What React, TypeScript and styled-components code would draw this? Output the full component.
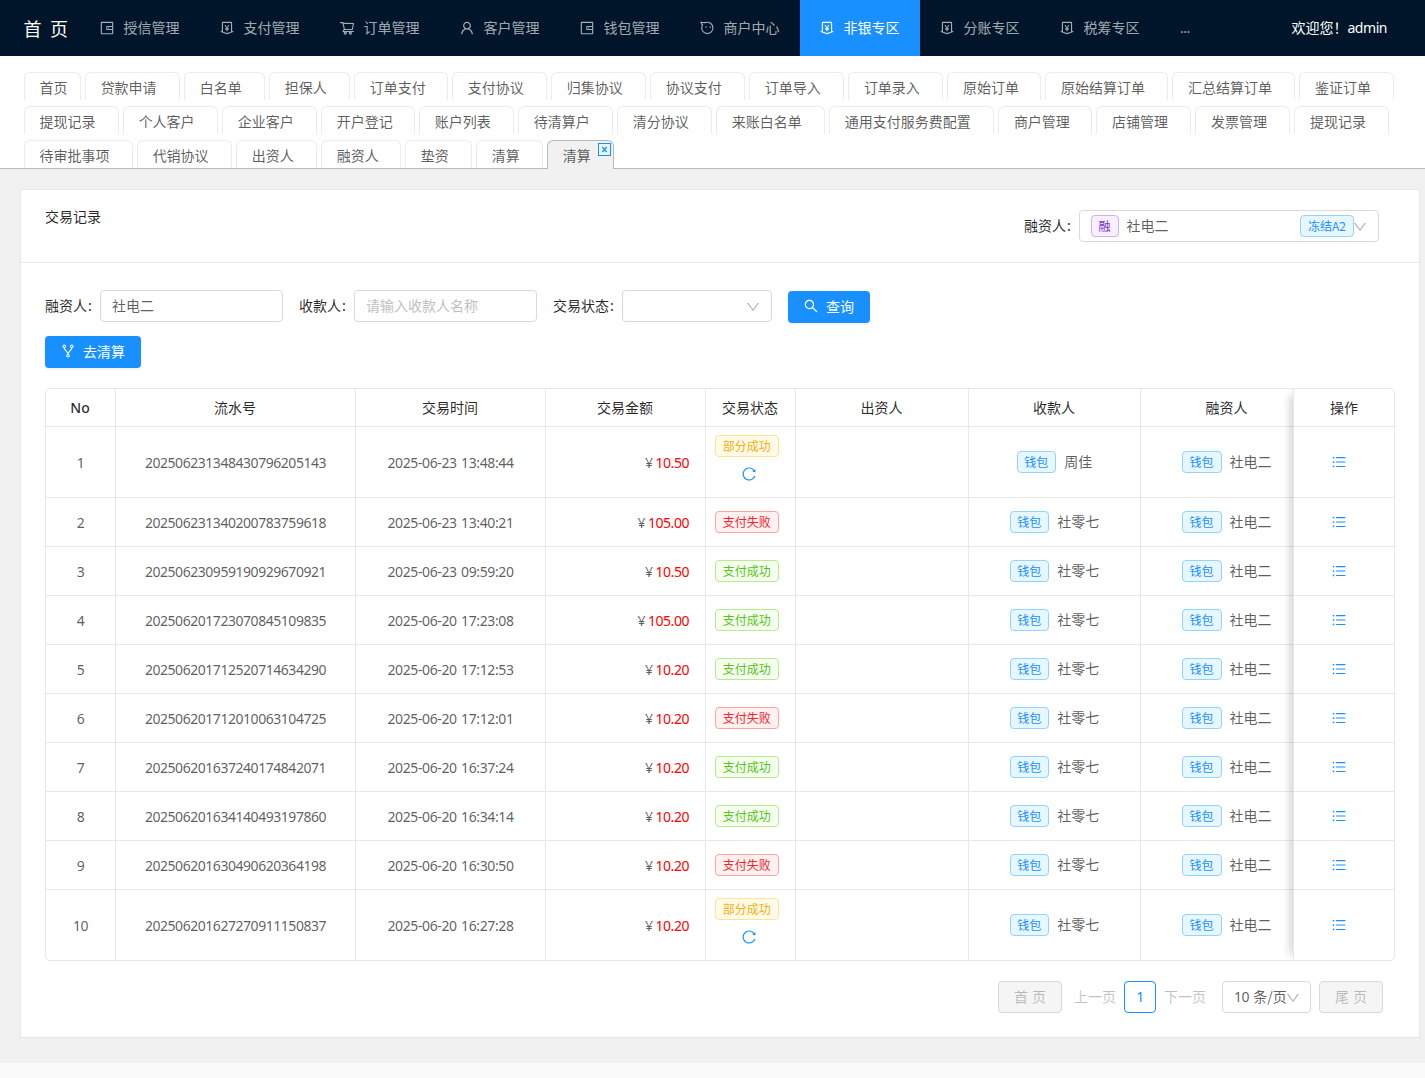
import React from 'react';
import styled, { createGlobalStyle, css } from 'styled-components';
import {
  AiOutlineWallet,
  AiOutlineMoneyCollect,
  AiOutlineShoppingCart,
  AiOutlineUser,
  AiOutlineSearch,
  AiOutlineFork,
  AiOutlineReload,
  AiOutlineUnorderedList,
  AiOutlineDown,
} from 'react-icons/ai';

const Global = createGlobalStyle`
  * { box-sizing: border-box; }
  body {
    margin: 0;
    background: #fafafa;
    color: rgba(0, 0, 0, 0.65);
    font-family: "Noto Sans CJK SC", sans-serif;
    font-size: 14px;
    line-height: 22px;
  }
  svg { display: block; flex: none; }
`;

const Latin = styled.span`
  font-family: "Noto Sans", "Noto Sans CJK SC", sans-serif;
  letter-spacing: -0.46px;
  word-spacing: 1px;
`;

const Zh = styled.span`
  padding-bottom: 2px;
`;

const Header = styled.header`
  display: flex;
  align-items: center;
  height: 56px;
  background: #001529;
  color: #fff;
`;

const Brand = styled.div`
  width: 80px;
  padding: 0 0 1px 23.5px;
  font-size: 18px;
  white-space: pre;
  word-spacing: 4.5px;
`;

const NavItem = styled.div<{ $active?: boolean }>`
  display: flex;
  align-items: center;
  gap: 8.6px;
  width: 120px;
  height: 56px;
  padding-left: 19px;
  color: ${(p) => (p.$active ? '#fff' : 'rgba(255, 255, 255, 0.65)')};
  background: ${(p) => (p.$active ? '#1890ff' : 'transparent')};
`;

const NavMore = styled(NavItem)`
  padding-left: 20px;
`;

const Welcome = styled.div`
  margin-left: auto;
  padding: 0 38px 2px 0;
`;

const TabBar = styled.nav`
  display: flex;
  flex-direction: column;
  gap: 6px;
  height: 113px;
  padding: 16px 0 0 24px;
  background: #fff;
  border-bottom: 1px solid #b9b9b9;
`;

const TabRow = styled.div`
  display: flex;
  gap: 4.04px;
  height: 28px;
`;

const Tab = styled.div<{ $w: number; $active?: boolean }>`
  position: relative;
  flex: none;
  width: ${(p) => p.$w}px;
  height: ${(p) => (p.$active ? 29 : 28)}px;
  padding-left: 14.6px;
  line-height: 29px;
  border: 1px solid ${(p) => (p.$active ? '#b9b9b9' : '#ececec')};
  border-bottom: 0;
  border-radius: 6px 6px 0 0;
  background: ${(p) => (p.$active ? '#f1f1f1' : '#fff')};
`;

const TabClose = styled.span`
  position: absolute;
  top: 2px;
  right: 2px;
`;

const Content = styled.main`
  height: 894px;
  padding: 20px 5px 0 20px;
  background: #f1f1f1;
`;

const Card = styled.section`
  height: 849px;
  background: #fff;
  border: 1px solid #e8e8e8;
`;

const CardHead = styled.div`
  display: flex;
  justify-content: space-between;
  height: 73px;
  padding: 20px 40px 0 24px;
  border-bottom: 1px solid #e8e8e8;
  color: rgba(0, 0, 0, 0.85);
`;

const CardTitle = styled.div`
  margin-top: -5px;
`;

const Field = styled.div`
  display: flex;
  align-items: center;
  height: 32px;
  color: rgba(0, 0, 0, 0.85);
`;

const Colon = styled.span`
  width: 13px;
  padding: 0 0 2px 1px;
`;

const Box = styled.div<{ $w: number }>`
  display: flex;
  align-items: center;
  width: ${(p) => p.$w}px;
  height: 32px;
  padding: 0 11px;
  border: 1px solid #d9d9d9;
  border-radius: 4px;
  background: #fff;
  color: rgba(0, 0, 0, 0.65);
`;

const SelectBox = styled(Box)`
  gap: 8px;
`;

const Placeholder = styled(Zh)`
  color: #bfbfbf;
`;

const Caret = styled(AiOutlineDown)`
  width: 16px;
  height: 16px;
  margin: 1px -1px 0 -2px;
  color: rgba(0, 0, 0, 0.28);
`;

const Push = styled.span`
  margin-left: auto;
  display: flex;
  align-items: center;
`;

const tones = {
  purple: ['#722ed1', '#f9f0ff', '#d3adf7'],
  blue: ['#1890ff', '#e6f7ff', '#91d5ff'],
  gold: ['#faad14', '#fffbe6', '#ffe58f'],
  red: ['#f5222d', '#fff1f0', '#ffa39e'],
  green: ['#52c41a', '#f6ffed', '#b7eb8f'],
};
type Tone = keyof typeof tones;

const Tag = styled.span<{ $tone: Tone }>`
  display: inline-block;
  height: 22px;
  padding: 0 7px 0 6.6px;
  border: 1px solid ${(p) => tones[p.$tone][2]};
  border-radius: 4px;
  background: ${(p) => tones[p.$tone][1]};
  color: ${(p) => tones[p.$tone][0]};
  font-size: 12px;
  line-height: 20px;
  white-space: nowrap;
`;

const Filters = styled.div`
  display: flex;
  gap: 16px;
  padding: 27px 24px 0;
`;

const Button = styled.button<{ $w: number; $drop?: number }>`
  display: flex;
  align-items: center;
  gap: 7px;
  width: ${(p) => p.$w}px;
  height: 32px;
  margin: ${(p) => p.$drop || 0}px 0 0;
  padding: 0 0 ${(p) => (p.$drop ? 3 : 2)}px 15px;
  border: 0;
  border-radius: 4px;
  background: #1890ff;
  box-shadow: 0 2px 0 rgba(0, 0, 0, 0.045);
  color: #fff;
  font: inherit;
`;

const Actions = styled.div`
  padding: 13px 24px 0;
`;

const columns = '70px 240px 190px 160px 90px 173px 172px 153px 101px';

const Table = styled.div`
  margin: 20px 24px 0;
  width: 1350px;
  border: 1px solid #e8e8e8;
  border-radius: 4px;
  position: relative;
`;

const Row = styled.div<{ $h: number }>`
  display: grid;
  grid-template-columns: ${columns};
  height: ${(p) => p.$h}px;
  border-bottom: 1px solid #e8e8e8;
  &:nth-last-child(2) { height: ${(p) => p.$h - 1}px; border-bottom: 0; }
`;

const FixedShadow = styled.div`
  position: absolute;
  top: 0;
  bottom: 0;
  right: 101px;
  width: 10px;
  overflow: hidden;
  &::after {
    content: '';
    position: absolute;
    top: 6px;
    bottom: 6px;
    left: 10px;
    width: 10px;
    box-shadow: -3px 0 8px rgba(0, 0, 0, 0.18);
  }
`;

const cellBase = css`
  display: flex;
  align-items: center;
  justify-content: center;
  border-right: 1px solid #e8e8e8;
  &:last-child { border-right: 0; }
`;

const HeadCell = styled.div`
  ${cellBase}
  padding-right: 1px;
  color: rgba(0, 0, 0, 0.85);
`;

const NoLabel = styled(Latin)`
  font-weight: 500;
  letter-spacing: 0;
`;

const Cell = styled.div`
  ${cellBase}
`;

const CellText = styled(Latin)`
  padding-top: 1.5px;
`;

const TimeText = styled(CellText)`
  letter-spacing: -0.38px;
`;

const AmountCell = styled(Cell)`
  justify-content: flex-end;
  gap: 3px;
  padding-right: 16px;
`;

const Red = styled(CellText)`
  color: #f00;
`;

const StatusCell = styled(Cell)<{ $partial: boolean }>`
  flex-direction: column;
  gap: 10px;
  padding: 0 7px ${(p) => (p.$partial ? 8 : 0)}px 0;
`;

const PersonCell = styled(Cell)<{ $clip?: boolean }>`
  gap: 8px;
  justify-content: ${(p) => (p.$clip ? 'flex-start' : 'center')};
  padding-left: ${(p) => (p.$clip ? 41 : 0)}px;
`;

const HeadClip = styled(HeadCell)`
  padding-left: 20px;
`;

const OpCell = styled(Cell)`
  padding-right: 12px;
  color: #1890ff;
`;

const Refresh = styled.span`
  margin: -1px 0 -1px 4px;
  color: #1890ff;
`;

const Pager = styled.div`
  display: flex;
  align-items: center;
  justify-content: flex-end;
  margin-top: 20px;
  padding-right: 36px;
`;

const EdgeButton = styled.button`
  width: 64px;
  height: 32px;
  padding: 0 0 2px;
  border: 1px solid #d9d9d9;
  border-radius: 4px;
  background: #f5f5f5;
  color: rgba(0, 0, 0, 0.25);
  font: inherit;
  white-space: pre;
  word-spacing: 1px;
`;

const PageWord = styled(Zh)<{ $l: number; $r: number }>`
  margin: 0 ${(p) => p.$r}px 0 ${(p) => p.$l}px;
  color: rgba(0, 0, 0, 0.25);
`;

const PageNo = styled.span`
  display: flex;
  align-items: center;
  justify-content: center;
  width: 32px;
  height: 32px;
  border: 1px solid #1890ff;
  border-radius: 4px;
  color: #1890ff;
`;

const SizeBox = styled(Box)`
  margin-right: 8px;
  white-space: pre;
`;

const FaceIcon = () => (
  <svg width="16" height="16" viewBox="0 0 16 16" fill="none" stroke="currentColor" strokeWidth="1.1">
    <path d="M2 2.300C4.200 2.700 5.200 2.900 6.500 2.500C10.200 1.300 13.900 4 13.900 8A5.600 5.600 0 0 1 2.700 8C2.700 6.700 3.100 5.700 3.600 5C2.700 4.300 2.200 3.300 2 2.300Z" />
    <path d="M7 6.300v1.500M11.300 6.300v1.500" />
  </svg>
);

const nav = [
  { label: '授信管理', Icon: AiOutlineWallet },
  { label: '支付管理', Icon: AiOutlineMoneyCollect },
  { label: '订单管理', Icon: AiOutlineShoppingCart },
  { label: '客户管理', Icon: AiOutlineUser },
  { label: '钱包管理', Icon: AiOutlineWallet },
  { label: '商户中心', Icon: FaceIcon },
  { label: '非银专区', Icon: AiOutlineMoneyCollect, active: true },
  { label: '分账专区', Icon: AiOutlineMoneyCollect },
  { label: '税筹专区', Icon: AiOutlineMoneyCollect },
];

const tabRows: [string, number][][] = [
  [['首页', 57], ['贷款申请', 95], ['白名单', 81], ['担保人', 81], ['订单支付', 94], ['支付协议', 95], ['归集协议', 95], ['协议支付', 95], ['订单导入', 95], ['订单录入', 95], ['原始订单', 94], ['原始结算订单', 123], ['汇总结算订单', 123], ['鉴证订单', 95]],
  [['提现记录', 95], ['个人客户', 95], ['企业客户', 95], ['开户登记', 94], ['账户列表', 95], ['待清算户', 95], ['清分协议', 95], ['来账白名单', 109], ['通用支付服务费配置', 165], ['商户管理', 94], ['店铺管理', 95], ['发票管理', 95], ['提现记录', 95]],
  [['待审批事项', 109], ['代销协议', 95], ['出资人', 81], ['融资人', 80], ['垫资', 67], ['清算', 67], ['清算', 67]],
];

const statuses: Record<string, Tone> = { 部分成功: 'gold', 支付失败: 'red', 支付成功: 'green' };

const records = [
  ['202506231348430796205143', '2025-06-23 13:48:44', '10.50', '部分成功', '周佳'],
  ['202506231340200783759618', '2025-06-23 13:40:21', '105.00', '支付失败', '社零七'],
  ['202506230959190929670921', '2025-06-23 09:59:20', '10.50', '支付成功', '社零七'],
  ['202506201723070845109835', '2025-06-20 17:23:08', '105.00', '支付成功', '社零七'],
  ['202506201712520714634290', '2025-06-20 17:12:53', '10.20', '支付成功', '社零七'],
  ['202506201712010063104725', '2025-06-20 17:12:01', '10.20', '支付失败', '社零七'],
  ['202506201637240174842071', '2025-06-20 16:37:24', '10.20', '支付成功', '社零七'],
  ['202506201634140493197860', '2025-06-20 16:34:14', '10.20', '支付成功', '社零七'],
  ['202506201630490620364198', '2025-06-20 16:30:50', '10.20', '支付失败', '社零七'],
  ['202506201627270911150837', '2025-06-20 16:27:28', '10.20', '部分成功', '社零七'],
];

const heads = ['流水号', '交易时间', '交易金额', '交易状态', '出资人', '收款人'];

export default function App() {
  return (
    <>
      <Global />
      <Header>
        <Brand>首 页</Brand>
        {nav.map(({ label, Icon, active }) => (
          <NavItem key={label} $active={active}>
            <Icon size={16} />
            <Zh>{label}</Zh>
          </NavItem>
        ))}
        <NavMore><Latin>...</Latin></NavMore>
        <Welcome>欢迎您！<Latin>admin</Latin></Welcome>
      </Header>
      <TabBar>
        {tabRows.map((row, r) => (
          <TabRow key={r}>
            {row.map(([label, w], i) => {
              const active = r === 2 && i === row.length - 1;
              return (
                <Tab key={i} $w={w} $active={active}>
                  {label}
                  {active && (
                    <TabClose>
                      <svg width="13" height="13" viewBox="0 0 13 13" fill="#e6f7ff" stroke="#1890ff">
                        <rect x="0.500" y="0.500" width="12" height="12" />
                        <path d="M4.300 4l4.400 5M8.700 4L4.300 9" strokeWidth="1.200" />
                      </svg>
                    </TabClose>
                  )}
                </Tab>
              );
            })}
          </TabRow>
        ))}
      </TabBar>
      <Content>
        <Card>
          <CardHead>
            <CardTitle>交易记录</CardTitle>
            <Field>
              <Zh>融资人</Zh><Colon>:</Colon>
              <SelectBox $w={300}>
                <Tag $tone="purple">融</Tag>
                <Zh>社电二</Zh>
                <Push>
                  <Tag $tone="blue">冻结A2</Tag>
                  <Caret />
                </Push>
              </SelectBox>
            </Field>
          </CardHead>
          <Filters>
            <Field><Zh>融资人</Zh><Colon>:</Colon><Box $w={183}><Zh>社电二</Zh></Box></Field>
            <Field><Zh>收款人</Zh><Colon>:</Colon><Box $w={183}><Placeholder>请输入收款人名称</Placeholder></Box></Field>
            <Field><Zh>交易状态</Zh><Colon>:</Colon><Box $w={150}><Push><Caret /></Push></Box></Field>
            <Button $w={82} $drop={1}><AiOutlineSearch size={16} />查询</Button>
          </Filters>
          <Actions>
            <Button $w={96}><AiOutlineFork size={16} />去清算</Button>
          </Actions>
          <Table>
            <Row $h={38}>
              <HeadCell><NoLabel>No</NoLabel></HeadCell>
              {heads.map((h) => <HeadCell key={h}><Zh>{h}</Zh></HeadCell>)}
              <HeadClip><Zh>融资人</Zh></HeadClip>
              <HeadCell><Zh>操作</Zh></HeadCell>
            </Row>
            {records.map(([id, time, amount, status, payee], i) => {
              const partial = status === '部分成功';
              return (
                <Row key={id} $h={partial ? 71 : 49}>
                  <Cell><CellText>{i + 1}</CellText></Cell>
                  <Cell><CellText>{id}</CellText></Cell>
                  <Cell><TimeText>{time}</TimeText></Cell>
                  <AmountCell><CellText>¥</CellText><Red>{amount}</Red></AmountCell>
                  <StatusCell $partial={partial}>
                    <Tag $tone={statuses[status]}>{status}</Tag>
                    {partial && <Refresh><AiOutlineReload size={16} /></Refresh>}
                  </StatusCell>
                  <Cell />
                  <PersonCell><Tag $tone="blue">钱包</Tag><Zh>{payee}</Zh></PersonCell>
                  <PersonCell $clip><Tag $tone="blue">钱包</Tag><Zh>社电二</Zh></PersonCell>
                  <OpCell><AiOutlineUnorderedList size={16} /></OpCell>
                </Row>
              );
            })}
            <FixedShadow />
          </Table>
          <Pager>
            <EdgeButton>首 页</EdgeButton>
            <PageWord $l={12} $r={8}>上一页</PageWord>
            <PageNo><Latin>1</Latin></PageNo>
            <PageWord $l={8} $r={16}>下一页</PageWord>
            <SizeBox $w={89}><Latin>10 </Latin><Zh>条/页</Zh><Caret /></SizeBox>
            <EdgeButton>尾 页</EdgeButton>
          </Pager>
        </Card>
      </Content>
    </>
  );
}
